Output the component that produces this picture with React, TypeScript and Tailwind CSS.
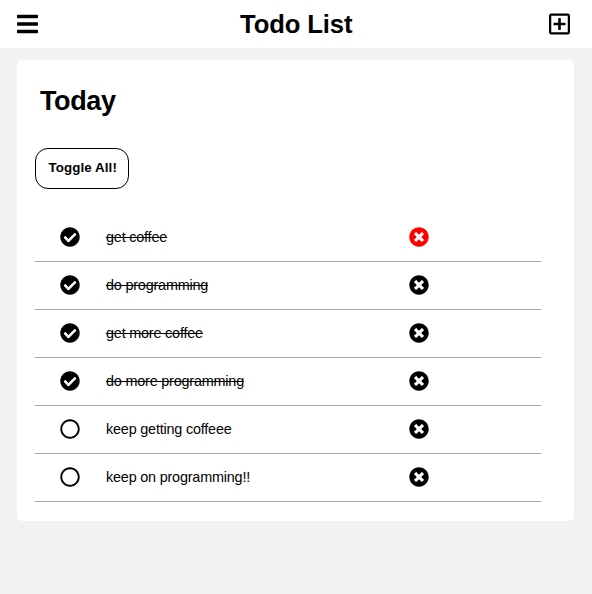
import { FaBars, FaCheckCircle, FaRegCircle, FaRegPlusSquare, FaTimesCircle } from "react-icons/fa";

const todos = [
  { text: "get coffee", done: true, active: true },
  { text: "do programming", done: true },
  { text: "get more coffee", done: true },
  { text: "do more programming", done: true },
  { text: "keep getting coffeee", done: false },
  { text: "keep on programming!!", done: false },
];

export default function App() {
  return (
    <div className="flex min-h-screen flex-col bg-[#f2f2f2] font-['Liberation_Sans',Arial,sans-serif] text-black">
      <header className="flex h-12 items-center justify-between bg-white pr-[21.5px] pl-[17px]">
        <button aria-label="Menu">
          <FaBars className="h-6 w-[21px]" />
        </button>
        <h1 className="pl-[5px] text-[25.6px] leading-[48px] font-bold tracking-[-0.1px]">Todo List</h1>
        <button aria-label="Add">
          <FaRegPlusSquare className="h-6 w-[21px]" />
        </button>
      </header>
      <main className="mt-[11.6px] mr-[18.5px] ml-[17px] h-[461px] rounded-[5px] bg-white pr-[32.5px] pl-[18px]">
        <h2 className="pt-[25px] pl-[5px] text-[27px] leading-8 font-bold tracking-[-0.4px]">Today</h2>
        <button className="mt-[31px] h-[41px] w-[94.4px] rounded-[13px] border border-black pb-px pl-px text-[13.33px] font-bold tracking-[0.1px]">
          Toggle All!
        </button>
        <ul className="mt-[25.4px]">
          {todos.map((todo) => (
            <li key={todo.text} className="flex h-12 items-center border-b border-[#a6a6a6] pl-[25px] text-[14.4px] tracking-[-0.19px]">
              {todo.done ? <FaCheckCircle className="mb-px size-5" /> : <FaRegCircle className="mb-px size-5" />}
              <span className={`ml-[26px] w-[303px] ${todo.done ? "line-through" : ""}`}>{todo.text}</span>
              <FaTimesCircle className={`mb-px size-5 ${todo.active ? "text-[#ff0000]" : ""}`} />
            </li>
          ))}
        </ul>
      </main>
    </div>
  );
}
